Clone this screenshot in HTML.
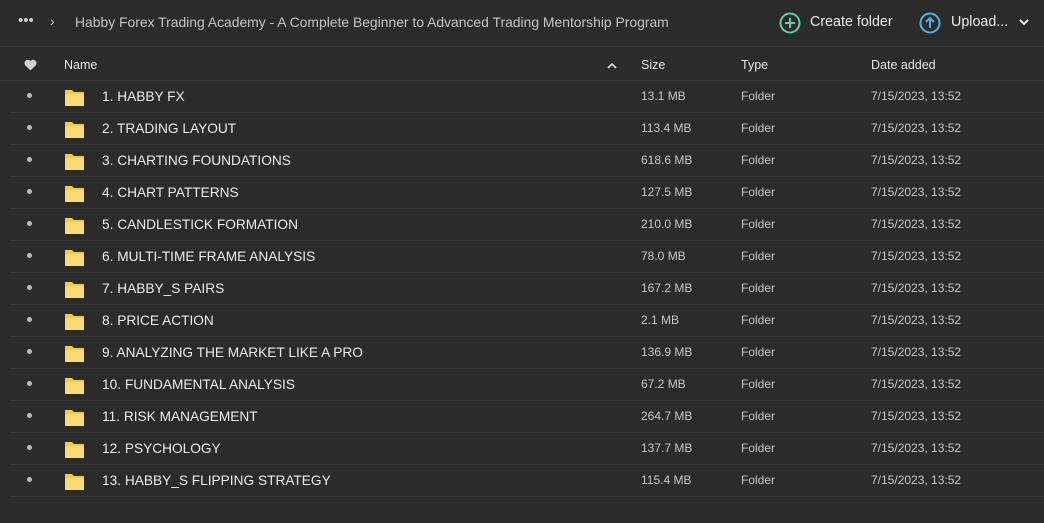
<!DOCTYPE html>
<html><head><style>
*{margin:0;padding:0;box-sizing:border-box}
body{width:1044px;height:523px;background:#2b2b2b;font-family:"Liberation Sans",sans-serif;color:#e6e6e6;position:relative;overflow:hidden}
.top{position:absolute;left:0;top:0;width:1044px;height:47px;border-bottom:1px solid #3c3c3c}
.t{position:absolute;white-space:nowrap}
.hdr{position:absolute;top:48px;left:0;width:1044px;height:33px;border-bottom:1px solid #3c3c3c;font-size:12.5px;color:#e6e6e6}
.row{position:absolute;left:10px;width:1034px;height:32px;border-bottom:1px solid #3a3a3a;font-size:12px;color:#c8c8c8}
.row .n{position:absolute;left:92px;top:8px;font-size:13.7px;color:#ececec}
.dot{position:absolute;left:17px;top:12px;width:5px;height:5px;border-radius:50%;background:#bdbdbd}
.f{position:absolute;left:55px;top:8px}
</style></head><body>
<div class="top">
<div class="t" style="left:18px;top:12px;font-size:15px;color:#cfcfcf;letter-spacing:0px">•••</div>
<div class="t" style="left:50px;top:13px;font-size:14px;color:#cfcfcf">›</div>
<div class="t" style="left:75px;top:14px;font-size:13.9px;color:#c4c4c4">Habby Forex Trading Academy - A Complete Beginner to Advanced Trading Mentorship Program</div>
<svg class="t" style="left:779px;top:12px" width="22" height="22"><circle cx="11" cy="11" r="9.5" fill="none" stroke="#5fcfa0" stroke-width="2"/><path d="M11 6v10M6 11h10" stroke="#5fcfa0" stroke-width="2"/></svg>
<div class="t" style="left:810px;top:14px;font-size:14.3px;color:#ececec">Create folder</div>
<svg class="t" style="left:919px;top:12px" width="22" height="22"><circle cx="11" cy="11" r="9.5" fill="none" stroke="#4fb3e8" stroke-width="2"/><path d="M11 16V6M7 10l4-4 4 4" fill="none" stroke="#4fb3e8" stroke-width="2"/></svg>
<div class="t" style="left:951px;top:14px;font-size:14.3px;color:#ececec">Upload...</div>
<svg class="t" style="left:1019px;top:19px" width="10" height="8"><path d="M1 1l4 4 4-4" fill="none" stroke="#eee" stroke-width="2"/></svg>
</div>
<div class="hdr">
<svg class="t" style="left:24px;top:11px" width="13" height="12"><path d="M6.5 11.5L1.2 6.2A3 3 0 0 1 6.5 2a3 3 0 0 1 5.3 4.2z" fill="#cfcfcf"/></svg>
<div class="t" style="left:64px;top:10px">Name</div>
<svg class="t" style="left:607px;top:14px" width="10" height="7"><path d="M1 6l4-4 4 4" fill="none" stroke="#ddd" stroke-width="1.6"/></svg>
<div class="t" style="left:641px;top:10px">Size</div>
<div class="t" style="left:741px;top:10px">Type</div>
<div class="t" style="left:871px;top:10px">Date added</div>
</div>
<div id="rows"></div>
<script>
var d=[["1. HABBY FX","13.1 MB"],["2. TRADING LAYOUT","113.4 MB"],["3. CHARTING FOUNDATIONS","618.6 MB"],["4. CHART PATTERNS","127.5 MB"],["5. CANDLESTICK FORMATION","210.0 MB"],["6. MULTI-TIME FRAME ANALYSIS","78.0 MB"],["7. HABBY_S PAIRS","167.2 MB"],["8. PRICE ACTION","2.1 MB"],["9. ANALYZING THE MARKET LIKE A PRO","136.9 MB"],["10. FUNDAMENTAL ANALYSIS","67.2 MB"],["11. RISK MANAGEMENT","264.7 MB"],["12. PSYCHOLOGY","137.7 MB"],["13. HABBY_S FLIPPING STRATEGY","115.4 MB"]];
var h="";d.forEach(function(r,i){h+='<div class="row" style="top:'+(81+i*32)+'px"><div class="dot"></div><svg class="f" width="19" height="17"><path d="M0 1h7l2 2h10v14H0z" fill="#f5c84c"/><path d="M0 5h19v12H0z" fill="#fddb74"/></svg><div class="n">'+r[0]+'</div><div class="t" style="left:631px;top:8px">'+r[1]+'</div><div class="t" style="left:731px;top:8px">Folder</div><div class="t" style="left:861px;top:8px">7/15/2023, 13:52</div></div>'});
document.getElementById("rows").innerHTML=h;
</script>
</body></html>
